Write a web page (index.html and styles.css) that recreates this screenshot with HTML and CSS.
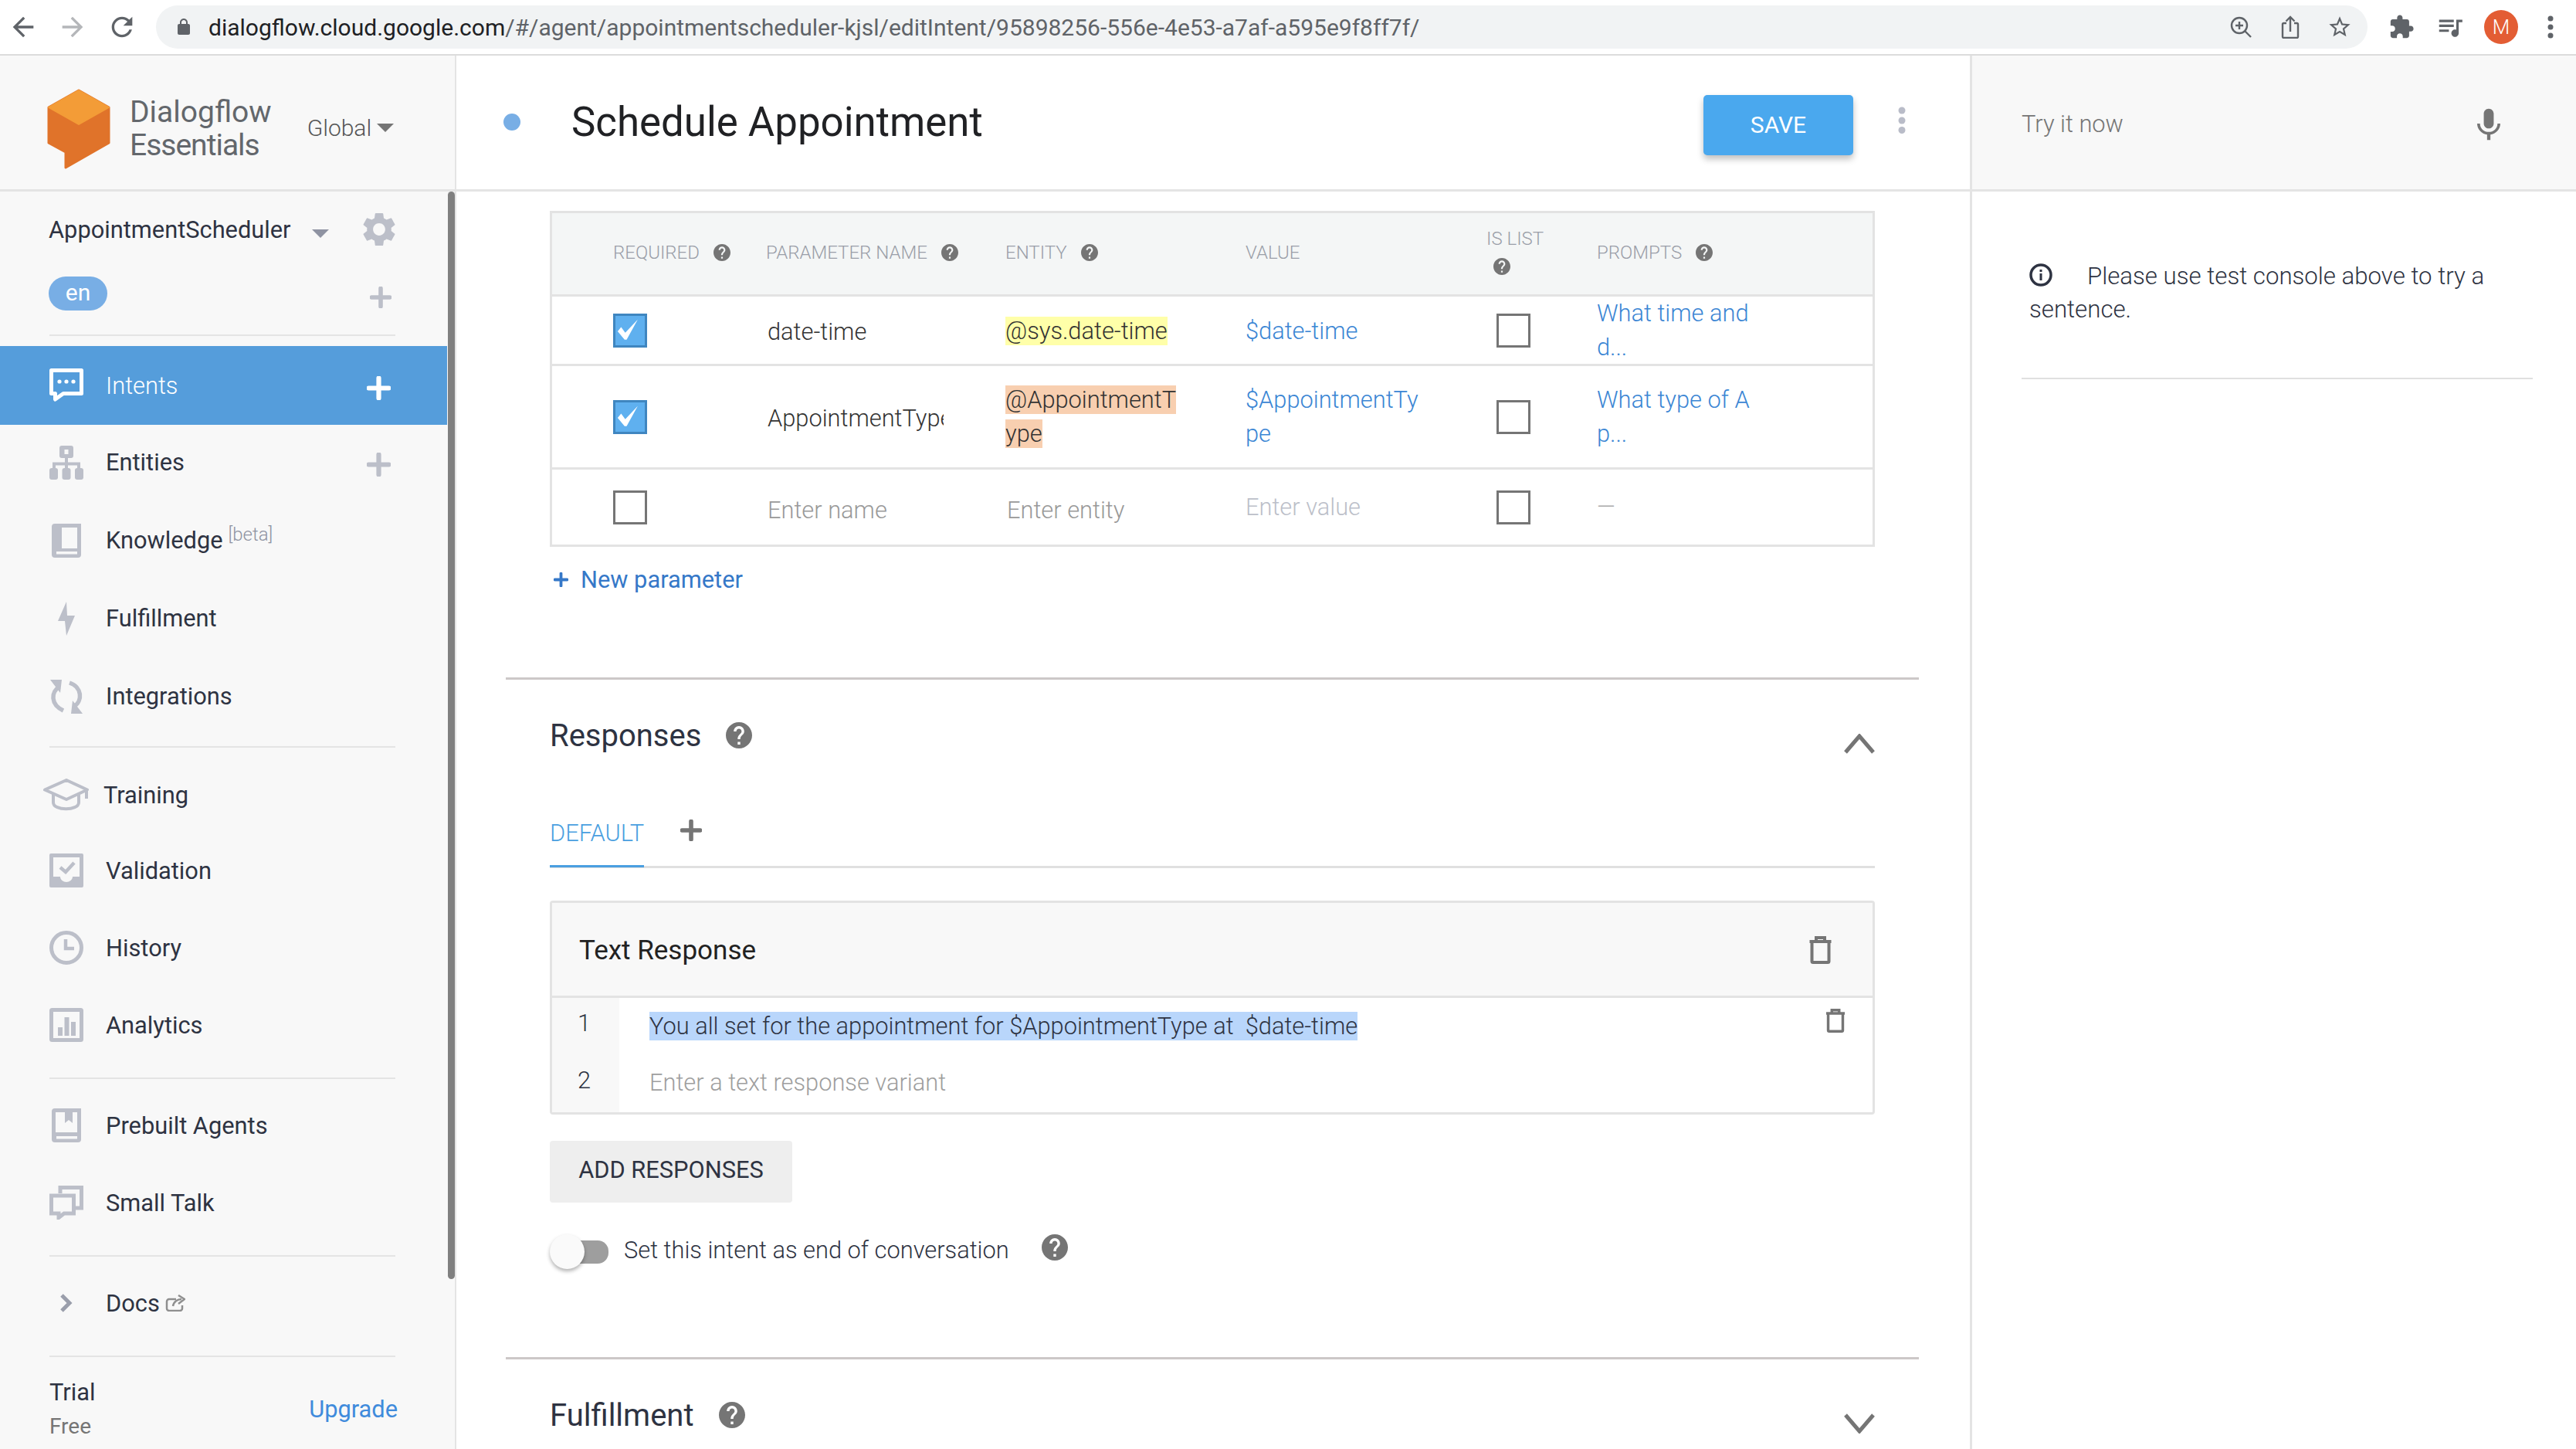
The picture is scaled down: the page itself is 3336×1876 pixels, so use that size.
FILE: index.html
```html
<!DOCTYPE html>
<html lang="en">
<head>
    <meta charset="UTF-8">
    <title>Schedule Appointment - Dialogflow</title>
    <link rel="stylesheet" href="styles.css">
</head>
<body>
    <svg class="sprites" aria-hidden="true">
        <symbol id="i-help" viewBox="2 2 20 20"><path fill-rule="evenodd" d="M12 2C6.48 2 2 6.48 2 12s4.48 10 10 10 10-4.48 10-10S17.52 2 12 2zm1 17h-2v-2h2v2zm2.07-7.75l-.9.92C13.45 12.9 13 13.5 13 15h-2v-.5c0-1.1.45-2.1 1.17-2.83l1.24-1.26c.37-.36.59-.86.59-1.41 0-1.1-.9-2-2-2s-2 .9-2 2H8c0-2.21 1.79-4 4-4s4 1.79 4 4c0 .88-.36 1.68-.93 2.25z"/></symbol>
        <symbol id="i-plus" viewBox="0 0 30 30"><path d="M15 2.5v25M2.5 15h25" fill="none" stroke="currentColor" stroke-width="6" stroke-linecap="round"/></symbol>
        <symbol id="i-trash" viewBox="0 0 30 36"><path d="M9.500 6V2h11v4M1 7h28M4 8v24.500a1.500 1.500 0 0 0 1.500 1.500h19a1.500 1.500 0 0 0 1.500-1.500V8" fill="none" stroke="currentColor" stroke-width="4"/></symbol>
        <symbol id="i-check" viewBox="0 0 38 38"><path d="M1 20L6 14L12 22L30 3L14 32H11Z" fill="#fff"/></symbol>
    </svg>

    <!-- browser toolbar -->
    <div class="browser-bar">
        <svg class="br-nav" viewBox="0 0 24 24"><path d="M20 11H7.830l5.590-5.590L12 4l-8 8 8 8 1.410-1.410L7.830 13H20v-2z"/></svg>
        <svg class="br-nav br-disabled" viewBox="0 0 24 24"><path d="M4 13h12.170l-5.590 5.590L12 20l8-8-8-8-1.410 1.410L16.170 11H4v2z"/></svg>
        <svg class="br-nav" viewBox="0 0 24 24"><path d="M17.650 6.350C16.200 4.900 14.210 4 12 4c-4.420 0-7.990 3.580-7.990 8s3.570 8 7.990 8c3.730 0 6.840-2.550 7.730-6h-2.080c-.82 2.330-3.040 4-5.650 4-3.310 0-6-2.690-6-6s2.690-6 6-6c1.660 0 3.140.69 4.220 1.780L13 11h7V4l-2.350 2.350z"/></svg>
        <div class="omnibox">
            <svg class="lock" viewBox="0 0 24 24"><path fill-rule="evenodd" d="M18 8h-1V6c0-2.760-2.240-5-5-5S7 3.240 7 6v2H6c-1.100 0-2 .9-2 2v10c0 1.100.9 2 2 2h12c1.100 0 2-.9 2-2V10c0-1.100-.9-2-2-2zM9 6c0-1.660 1.340-3 3-3s3 1.340 3 3v2H9V6z"/></svg>
            <span class="url">dialogflow.cloud.google.com<span class="url-path">/#/agent/appointmentscheduler-kjsl/editIntent/95898256-556e-4e53-a7af-a595e9f8ff7f/</span></span>
            <svg class="omni-icon" viewBox="-3 -1 34 30"><circle cx="12" cy="12" r="10" fill="none" stroke="currentColor" stroke-width="2.400"/><path d="M19 19L27 27M12 7v10M7 12h10" fill="none" stroke="currentColor" stroke-width="2.400"/></svg>
            <svg class="omni-icon" viewBox="-3 0 34 30"><path d="M9 10H5.500a1.500 1.500 0 0 0-1.500 1.500v16a1.500 1.500 0 0 0 1.500 1.500h17a1.500 1.500 0 0 0 1.500-1.500v-16a1.500 1.500 0 0 0-1.500-1.500H19M14 21V2M8.500 7.500L14 2l5.500 5.500" fill="none" stroke="currentColor" stroke-width="2.400"/></svg>
            <svg class="omni-icon" viewBox="1 1 22 22"><path fill="currentColor" fill-rule="evenodd" d="M22 9.240l-7.190-.62L12 2 9.190 8.630 2 9.240l5.460 4.730L5.820 21 12 17.270 18.180 21l-1.630-7.030L22 9.240zM12 15.400l-3.760 2.270 1-4.280-3.320-2.880 4.380-.38L12 6.100l1.710 4.040 4.380.38-3.320 2.880 1 4.280L12 15.400z"/></svg>
        </div>
        <svg class="br-tool" viewBox="0 0 24 24"><path d="M20.500 11H19V7c0-1.100-.9-2-2-2h-4V3.500C13 2.120 11.880 1 10.500 1S8 2.120 8 3.500V5H4c-1.100 0-1.990.9-1.990 2v3.800H3.500c1.490 0 2.700 1.210 2.700 2.700s-1.210 2.700-2.700 2.700H2V20c0 1.100.9 2 2 2h3.800v-1.500c0-1.490 1.210-2.700 2.700-2.700 1.490 0 2.700 1.210 2.700 2.700V22H17c1.100 0 2-.9 2-2v-4h1.500c1.380 0 2.500-1.120 2.500-2.500S21.880 11 20.500 11z"/></svg>
        <svg class="br-tool" viewBox="0 0 24 24"><path d="M15 6H3v2h12V6zm0 4H3v2h12v-2zM3 16h8v-2H3v2zM17 6v8.180c-.31-.11-.65-.18-1-.18-1.660 0-3 1.340-3 3s1.340 3 3 3 3-1.340 3-3V8h3V6h-5z"/></svg>
        <div class="avatar">M</div>
        <svg class="br-menu" viewBox="0 0 8 32"><circle cx="4" cy="5" r="3.500"/><circle cx="4" cy="16" r="3.500"/><circle cx="4" cy="27" r="3.500"/></svg>
    </div>

    <div class="app">
        <!-- left navigation -->
        <aside class="sidebar">
            <div class="brand">
                <svg class="logo" viewBox="-2 -2 84 106">
                    <path d="M40 1L79 23V69L23 101V81L1 69V23Z" fill="#e0732a" stroke="#e0732a" stroke-width="3" stroke-linejoin="round"/>
                    <path d="M40 1L79 23L40 45L1 23Z" fill="#f39c37" stroke="#f39c37" stroke-width="2" stroke-linejoin="round"/>
                </svg>
                <div class="brand-name">Dialogflow<br><span class="brand-second">Essentials</span></div>
                <div class="region">Global<span class="caret caret-dark"></span></div>
            </div>

            <div class="agent">
                <div class="agent-row">
                    <span class="agent-name">AppointmentScheduler</span>
                    <span class="caret caret-light"></span>
                    <svg class="gear" viewBox="2 1.500 20 21"><path fill-rule="evenodd" d="M19.140 12.940c.04-.3.06-.61.06-.94 0-.32-.02-.64-.07-.94l2.030-1.580c.18-.14.23-.41.12-.61l-1.920-3.320c-.12-.22-.37-.29-.59-.22l-2.390.96c-.5-.38-1.030-.7-1.620-.94l-.36-2.540c-.04-.24-.24-.41-.48-.41h-3.840c-.24 0-.43.17-.47.41l-.36 2.540c-.59.24-1.130.57-1.620.94l-2.390-.96c-.22-.08-.47 0-.59.22L2.740 8.870c-.12.21-.08.47.12.61l2.030 1.580c-.05.3-.09.63-.09.94s.02.64.07.94l-2.030 1.580c-.18.14-.23.41-.12.61l1.920 3.320c.12.22.37.29.59.22l2.390-.96c.5.38 1.030.7 1.620.94l.36 2.540c.05.24.24.41.48.41h3.840c.24 0 .44-.17.47-.41l.36-2.540c.59-.24 1.130-.56 1.620-.94l2.390.96c.22.08.47 0 .59-.22l1.920-3.320c.12-.22.07-.47-.12-.61l-2.010-1.580zM12 15.600c-1.980 0-3.600-1.620-3.600-3.600s1.620-3.600 3.600-3.600 3.600 1.620 3.600 3.600-1.620 3.600-3.600 3.600z"/></svg>
                </div>
                <div class="lang-row">
                    <span class="lang-pill">en</span>
                    <svg class="lang-plus"><use href="#i-plus"/></svg>
                </div>
            </div>
            <div class="side-divider"></div>

            <nav class="nav nav-main">
                <div class="nav-item active">
                    <svg class="nav-icon" viewBox="0 0 44 44"><path d="M2.500 2.500H41.500V32.500H18L7.500 40V32.500H2.500Z" fill="none" stroke="currentColor" stroke-width="5" stroke-linejoin="round"/><circle cx="13" cy="17" r="2.600" fill="currentColor"/><circle cx="22" cy="17" r="2.600" fill="currentColor"/><circle cx="31" cy="17" r="2.600" fill="currentColor"/></svg>
                    <span>Intents</span>
                    <svg class="nav-plus"><use href="#i-plus"/></svg>
                </div>
                <div class="nav-item">
                    <svg class="nav-icon" viewBox="0 0 44 44"><path fill="currentColor" fill-rule="evenodd" d="M16 0h12a3 3 0 0 1 3 3v10a3 3 0 0 1-3 3H16a3 3 0 0 1-3-3V3a3 3 0 0 1 3-3zm3.500 5v6h5V5z"/><path d="M22 15v15M6 30v-6.500h32V30" fill="none" stroke="currentColor" stroke-width="4"/><rect x="0" y="29" width="11" height="15" rx="3" fill="currentColor"/><rect x="16.500" y="29" width="11" height="15" rx="3" fill="currentColor"/><rect x="33" y="29" width="11" height="15" rx="3" fill="currentColor"/></svg>
                    <span>Entities</span>
                    <svg class="nav-plus"><use href="#i-plus"/></svg>
                </div>
                <div class="nav-item">
                    <svg class="nav-icon" viewBox="-3 0 44 44"><path fill="currentColor" fill-rule="evenodd" d="M4 0h34v40a4 4 0 0 1-4 4H4a4 4 0 0 1-4-4V4a4 4 0 0 1 4-4zm9 5v27h20V5zM6 36v3.500h27V36z"/></svg>
                    <span>Knowledge</span><span class="beta">[beta]</span>
                </div>
                <div class="nav-item">
                    <svg class="nav-icon" viewBox="-11 0 44 44"><path fill="currentColor" d="M11 0L0 25h9l2 19 11-26H12z"/></svg>
                    <span>Fulfillment</span>
                </div>
                <div class="nav-item">
                    <svg class="nav-icon" viewBox="0 0 44 44"><path d="M13 9C2 16 1 32 18 40M26 4C42 9 44 28 31 35" fill="none" stroke="currentColor" stroke-width="5.500"/><path fill="currentColor" d="M1 0h15l-2 17zM43 44H28l2-17z"/></svg>
                    <span>Integrations</span>
                </div>
            </nav>
            <div class="side-divider divider-a"></div>

            <nav class="nav">
                <div class="nav-item nav-training">
                    <svg class="nav-cap" viewBox="0 0 59 42"><path d="M2 14.500L30 2l27 12.500L30 27z" fill="none" stroke="currentColor" stroke-width="4" stroke-linejoin="round"/><path d="M13 20v11c0 11 33 11 33 0V20M56 14v12" fill="none" stroke="currentColor" stroke-width="4"/></svg>
                    <span>Training</span>
                </div>
                <div class="nav-item">
                    <svg class="nav-icon" viewBox="0 0 44 44"><path fill="currentColor" fill-rule="evenodd" d="M2 0h40a2 2 0 0 1 2 2v40a2 2 0 0 1-2 2H2a2 2 0 0 1-2-2V2a2 2 0 0 1 2-2zm3 5v25h9c0 4 4 7 8 7s8-3 8-7h9V5z"/><path d="M14 18l7 6 11-12" fill="none" stroke="currentColor" stroke-width="4.500"/></svg>
                    <span>Validation</span>
                </div>
                <div class="nav-item">
                    <svg class="nav-icon" viewBox="0 0 44 44"><circle cx="22" cy="22" r="19.500" fill="none" stroke="currentColor" stroke-width="5"/><path d="M21 11v12h11" fill="none" stroke="currentColor" stroke-width="4.500"/></svg>
                    <span>History</span>
                </div>
                <div class="nav-item">
                    <svg class="nav-icon" viewBox="0 0 44 44"><rect x="2.500" y="2.500" width="39" height="39" rx="1" fill="none" stroke="currentColor" stroke-width="5"/><path fill="currentColor" d="M11 25h6v11h-6zM19.500 12h6v24h-6zM28 18h6v18h-6z"/></svg>
                    <span>Analytics</span>
                </div>
            </nav>
            <div class="side-divider divider-b"></div>

            <nav class="nav">
                <div class="nav-item">
                    <svg class="nav-icon" viewBox="-3 0 44 44"><path fill="currentColor" fill-rule="evenodd" d="M4 0h34v40a4 4 0 0 1-4 4H4a4 4 0 0 1-4-4V4a4 4 0 0 1 4-4zm1 5v26h28V5h-6v14l-5-4-5 4V5zm1 31v3.500h27V36z"/></svg>
                    <span>Prebuilt Agents</span>
                </div>
                <div class="nav-item">
                    <svg class="nav-icon" viewBox="0 0 44 44"><path d="M14 10V2.500H41.500V29H34" fill="none" stroke="currentColor" stroke-width="5"/><path d="M2.500 13H31.500V36H19L12 41.500V36H2.500Z" fill="none" stroke="currentColor" stroke-width="5"/></svg>
                    <span>Small Talk</span>
                </div>
            </nav>
            <div class="side-divider divider-c"></div>

            <nav class="nav">
                <div class="nav-item">
                    <svg class="nav-chevron" viewBox="0 0 18 26"><path d="M3 3l10 10L3 23" fill="none" stroke="currentColor" stroke-width="5"/></svg>
                    <span>Docs</span>
                    <svg class="ext-link" viewBox="0 0 26 22"><path d="M14 6H5a3 3 0 0 0-3 3v9a3 3 0 0 0 3 3h14a3 3 0 0 0 3-3v-4" fill="none" stroke="currentColor" stroke-width="2.500"/><path d="M10 15c1-6 6-9 11-9M17 1l8 5-8 6" fill="none" stroke="currentColor" stroke-width="2.500"/></svg>
                </div>
            </nav>
            <div class="side-divider divider-c"></div>

            <div class="plan">
                <div>
                    <div class="plan-name">Trial</div>
                    <div class="plan-sub">Free</div>
                </div>
                <span class="upgrade">Upgrade</span>
            </div>
            <div class="side-scroll"></div>
        </aside>

        <!-- intent editor -->
        <main class="editor">
            <header class="editor-head">
                <span class="status-dot"></span>
                <h1 class="intent-title">Schedule Appointment</h1>
                <button class="save-btn">SAVE</button>
                <svg class="more" viewBox="0 0 10 36"><circle cx="5" cy="5" r="4.500"/><circle cx="5" cy="18" r="4.500"/><circle cx="5" cy="30.500" r="4.500"/></svg>
            </header>

            <div class="editor-body">
                <div class="params">
                    <div class="params-row params-head">
                        <div class="th">REQUIRED <svg class="help-sm"><use href="#i-help"/></svg></div>
                        <div class="th">PARAMETER NAME <svg class="help-sm"><use href="#i-help"/></svg></div>
                        <div class="th">ENTITY <svg class="help-sm"><use href="#i-help"/></svg></div>
                        <div class="th">VALUE</div>
                        <div class="th th-list">IS LIST<br><svg class="help-sm"><use href="#i-help"/></svg></div>
                        <div class="th">PROMPTS <svg class="help-sm"><use href="#i-help"/></svg></div>
                    </div>
                    <div class="params-row row-one">
                        <div><span class="check checked"><svg><use href="#i-check"/></svg></span></div>
                        <div class="cell-name">date-time</div>
                        <div class="cell-entity"><span class="hl-yellow">@sys.date-time</span></div>
                        <div class="link cell-value">$date-time</div>
                        <div class="cell-list"><span class="check"></span></div>
                        <div class="link">What time and<br>d...</div>
                    </div>
                    <div class="params-row row-two">
                        <div><span class="check checked"><svg><use href="#i-check"/></svg></span></div>
                        <div class="cell-name"><span class="clip">AppointmentType</span></div>
                        <div class="cell-entity"><span class="hl-orange">@AppointmentT<br>ype</span></div>
                        <div class="link">$AppointmentTy<br>pe</div>
                        <div class="cell-list"><span class="check"></span></div>
                        <div class="link">What type of A<br>p...</div>
                    </div>
                    <div class="params-row row-three">
                        <div><span class="check"></span></div>
                        <div class="cell-name ph">Enter name</div>
                        <div class="cell-entity ph">Enter entity</div>
                        <div class="ph-light">Enter value</div>
                        <div class="cell-list"><span class="check"></span></div>
                        <div class="ph-dash">—</div>
                    </div>
                </div>

                <div class="new-param"><svg class="new-plus"><use href="#i-plus"/></svg>New parameter</div>

                <section class="section">
                    <div class="section-head">
                        <h2>Responses</h2>
                        <svg class="help-lg"><use href="#i-help"/></svg>
                        <svg class="chev" viewBox="0 0 40 26"><path d="M2 24L20 3l18 21" fill="none" stroke="currentColor" stroke-width="5"/></svg>
                    </div>

                    <div class="tabs">
                        <div class="tab">DEFAULT</div>
                        <svg class="tab-plus"><use href="#i-plus"/></svg>
                    </div>

                    <div class="card">
                        <div class="card-head">
                            <span>Text Response</span>
                            <svg class="trash-lg"><use href="#i-trash"/></svg>
                        </div>
                        <div class="variant variant-one">
                            <div class="variant-num">1</div>
                            <div class="variant-text"><span class="selected">You all set for the appointment for $AppointmentType at &nbsp;$date-time</span></div>
                            <svg class="trash-sm"><use href="#i-trash"/></svg>
                        </div>
                        <div class="variant variant-two">
                            <div class="variant-num">2</div>
                            <div class="variant-text ph-dark">Enter a text response variant</div>
                        </div>
                    </div>

                    <button class="add-btn">ADD RESPONSES</button>

                    <div class="end-row">
                        <span class="switch"><span class="switch-knob"></span></span>
                        <span class="end-label">Set this intent as end of conversation</span>
                        <svg class="help-lg"><use href="#i-help"/></svg>
                    </div>
                </section>

                <section class="section section-last">
                    <div class="section-head">
                        <h2>Fulfillment</h2>
                        <svg class="help-lg"><use href="#i-help"/></svg>
                        <svg class="chev" viewBox="0 0 40 26"><path d="M2 2l18 21L38 2" fill="none" stroke="currentColor" stroke-width="5"/></svg>
                    </div>
                </section>
            </div>
        </main>

        <!-- test console -->
        <aside class="console">
            <div class="console-head">
                <span>Try it now</span>
                <svg class="mic" viewBox="5 2 14 19"><path d="M12 14c1.660 0 3-1.340 3-3V5c0-1.660-1.340-3-3-3S9 3.340 9 5v6c0 1.660 1.340 3 3 3zm5.300-3c0 3-2.540 5.100-5.300 5.100S6.700 14 6.700 11H5c0 3.410 2.720 6.230 6 6.720V21h2v-3.280c3.280-.48 6-3.300 6-6.720h-1.700z"/></svg>
            </div>
            <div class="console-body">
                <p class="console-msg"><svg class="info" viewBox="0 0 30 30"><circle cx="15" cy="15" r="13" fill="none" stroke="currentColor" stroke-width="3.500"/><path d="M13.500 8h3v3h-3zM13.500 13h3v9h-3z" fill="currentColor"/></svg>Please use test console above to try a sentence.</p>
            </div>
        </aside>
    </div>
</body>
</html>
```
FILE: styles.css
```css
/* Reset */
* {
    box-sizing: border-box;
}

body {
    margin: 0;
    width: 3336px;
    height: 1876px;
    overflow: hidden;
    background-color: #fff;
    color: #2e3342;
    font-family: Roboto, "Liberation Sans", sans-serif;
    font-size: 30.8px;
}

.sprites {
    display: none;
}

/* Browser toolbar */
.browser-bar {
    display: flex;
    align-items: center;
    height: 72px;
    padding-left: 10px;
    border-bottom: 2px solid #dcdcdc;
    fill: #5f6368;
}

.br-nav {
    width: 40px;
    height: 40px;
    margin-right: 24px;
    flex: none;
}

.br-disabled {
    fill: #b4b6b9;
}

.omnibox {
    display: flex;
    align-items: center;
    width: 2864px;
    height: 56px;
    padding-left: 24px;
    border-radius: 28px;
    background-color: #f1f3f4;
    color: #5f6368;
}

.lock {
    width: 24px;
    height: 26px;
    margin-right: 20px;
}

.url {
    flex: 1;
    font-size: 30px;
    color: #202124;
}

.url-path {
    color: #5f6368;
}

.omni-icon {
    width: 34px;
    height: 30px;
    margin-right: 30px;
}

.omni-icon:last-child {
    margin-right: 19px;
}

.br-tool {
    width: 34px;
    height: 34px;
    margin-left: 27px;
    margin-right: 2px;
}

.br-tool + .br-tool {
    width: 38px;
    height: 38px;
    margin-left: 25px;
    margin-right: 0;
}

.avatar {
    width: 44px;
    height: 44px;
    margin-left: 25px;
    border-radius: 50%;
    background-color: #e35d34;
    color: #fff;
    font-size: 26px;
    font-weight: 300;
    line-height: 44px;
    text-align: center;
}

.br-menu {
    width: 8px;
    height: 32px;
    margin-left: 38px;
}

/* Page columns */
.app {
    display: flex;
    height: 1804px;
}

/* Sidebar */
.sidebar {
    position: relative;
    flex: none;
    width: 591px;
    padding-right: 10px;
    border-right: 2px solid #e4e4e4;
    background-color: #f8f8f8;
}

.brand {
    display: flex;
    align-items: center;
    height: 176px;
    margin-right: -10px;
    padding: 16px 0 0 60px;
    border-bottom: 3px solid #e4e4e4;
}

.logo {
    width: 84px;
    height: 106px;
    flex: none;
}

.brand-name {
    margin-left: 24px;
    font-size: 39px;
    line-height: 43px;
    color: #63676c;
}

.brand-second {
    letter-spacing: -1px;
}

.region {
    margin-left: 46px;
    margin-top: -2px;
    font-size: 30px;
    font-weight: 300;
    color: #555;
}

.caret {
    display: inline-block;
    width: 0;
    height: 0;
    border-left: 11px solid transparent;
    border-right: 11px solid transparent;
}

.caret-dark {
    margin-left: 7px;
    margin-bottom: 5px;
    border-top: 11px solid #757575;
}

.caret-light {
    margin-left: 27px;
    margin-top: 10px;
    border-top: 11px solid #8f93a2;
}

.agent {
    padding-left: 63px;
}

.agent-row {
    display: flex;
    align-items: center;
    height: 46px;
    margin-top: 26px;
}

.gear {
    width: 44px;
    height: 46px;
    margin-left: 43px;
    fill: #bcbfc9;
}

.lang-row {
    display: flex;
    align-items: center;
    margin-top: 38px;
    height: 44px;
}

.lang-pill {
    width: 76px;
    height: 44px;
    border-radius: 22px;
    background-color: #78aee5;
    color: #fff;
    font-size: 30px;
    line-height: 42px;
    text-align: center;
}

.lang-plus {
    width: 28px;
    height: 28px;
    margin-left: 340px;
    margin-top: 10px;
    color: #bcbfc9;
}

.side-divider {
    height: 2px;
    margin: 31px 67px 13px 64px;
    background-color: #e4e4e4;
}

.divider-a {
    margin-top: 14px;
    margin-bottom: 11px;
}

.divider-b {
    margin-top: 18px;
    margin-bottom: 10px;
}

.divider-c {
    margin-top: 18px;
    margin-bottom: 10px;
}

.nav-item {
    display: flex;
    align-items: center;
    height: 100px;
    padding-left: 64px;
    color: #2e3342;
}

.nav-main .nav-item {
    height: 101px;
}

.nav-main .nav-item.active {
    height: 102px;
    margin-bottom: -2px;
    background-color: #559ddb;
    color: #fff;
    font-weight: 300;
}

.nav-training {
    margin-bottom: -2px;
}

.nav-icon {
    width: 44px;
    height: 44px;
    flex: none;
    margin-right: 29px;
    color: #bcbfc9;
}

.active .nav-icon,
.active .nav-plus {
    color: #fff;
}

.nav-plus {
    width: 31px;
    height: 31px;
    margin-left: auto;
    margin-right: 73px;
    margin-top: 6px;
    color: #bcbfc9;
}

.beta {
    margin-left: 7px;
    margin-bottom: 16px;
    font-size: 24px;
    font-weight: 300;
    color: #8f93a2;
}

.nav-cap {
    width: 59px;
    height: 42px;
    flex: none;
    margin-left: -8px;
    margin-right: 19px;
    color: #bcbfc9;
}

.nav-chevron {
    width: 18px;
    height: 26px;
    margin-left: 13px;
    margin-right: 42px;
    color: #9a9eab;
}

.ext-link {
    width: 26px;
    height: 22px;
    margin-left: 7px;
    color: #8f8f8f;
}

.plan {
    display: flex;
    align-items: center;
    justify-content: space-between;
    padding: 15px 64px 0 64px;
}

.plan-name {
    line-height: 42px;
}

.plan-sub {
    font-size: 28px;
    line-height: 46px;
    color: #757575;
}

.upgrade {
    margin-top: -3px;
    color: #3f8bdc;
}

.side-scroll {
    position: absolute;
    top: 176px;
    right: 0;
    width: 9px;
    height: 1408px;
    border-radius: 5px;
    background-color: #808080;
}

/* Intent editor */
.editor {
    flex: 1;
    min-width: 0;
}

.editor-head {
    display: flex;
    align-items: center;
    height: 176px;
    padding-left: 61px;
    border-bottom: 3px solid #e4e4e4;
}

.status-dot {
    width: 22px;
    height: 22px;
    margin-top: -2px;
    border-radius: 50%;
    background-color: #78aee5;
}

.intent-title {
    flex: 1;
    margin: -2px 0 0 66px;
    font-size: 52.8px;
    font-weight: 400;
    color: #202124;
}

.save-btn {
    width: 194px;
    height: 78px;
    margin-top: 6px;
    border: none;
    border-radius: 5px;
    background-color: #4aa8ee;
    box-shadow: 0 5px 9px rgba(0, 0, 0, 0.25);
    color: #fff;
    font-family: inherit;
    font-size: 30px;
}

.more {
    width: 10px;
    height: 36px;
    margin: -6px 83px 0 58px;
    fill: #b9bcc8;
}

.editor-body {
    padding: 25px 66px 0 64px;
}

/* Parameters table */
.params {
    margin: 0 57px;
    border: 3px solid #e3e3e3;
    border-bottom-width: 0;
}

.params-row {
    display: grid;
    grid-template-columns: 198px 310px 311px 312px 143px 1fr;
    align-items: center;
    padding-left: 79px;
    border-bottom: 3px solid #e3e3e3;
    font-weight: 300;
    line-height: 44px;
}

.params-head {
    height: 108px;
    padding-bottom: 4px;
    background-color: #f4f6f6;
}

.row-one {
    height: 90px;
}

.row-two {
    height: 134px;
}

.row-three {
    height: 100px;
}

.th {
    display: flex;
    align-items: center;
    gap: 18px;
    font-size: 24px;
    color: #9a9ea8;
}

.th-list {
    display: block;
    line-height: 36px;
}

.help-sm {
    width: 22px;
    height: 22px;
    fill: #757575;
}

.th-list .help-sm {
    display: block;
    margin: 7px 0 7px 9px;
}

.check {
    display: block;
    width: 44px;
    height: 44px;
    border: 3px solid #757575;
    background-color: #fff;
}

.check.checked {
    padding: 2px;
    border-color: #3f86c0;
    background-color: #5fb0ef;
}

.check svg {
    display: block;
    width: 34px;
    height: 34px;
}

.cell-name {
    margin-top: 4px;
    padding-left: 2px;
    color: #333;
}

.row-three .cell-name,
.row-three .cell-entity {
    margin-top: 8px;
}

.clip {
    display: block;
    width: 228px;
    overflow: hidden;
    white-space: nowrap;
}

.row-one .cell-entity,
.row-one .cell-value {
    margin-top: 2px;
}

.cell-entity {
    color: #333;
}

.cell-entity.ph {
    padding-left: 2px;
    color: #999;
}

.hl-yellow {
    background-color: #ffffa9;
}

.hl-orange {
    background-color: #f8cfb0;
}

.link {
    color: #3b86d4;
}

.cell-list {
    padding-left: 13px;
}

.ph {
    color: #999;
}

.ph-light {
    color: #bcbfc9;
}

.ph-dash {
    color: #aaa;
}

.new-param {
    display: flex;
    align-items: center;
    height: 40px;
    margin: 22px 57px 0;
    color: #3578c8;
}

.new-plus {
    width: 19px;
    height: 19px;
    margin: 0 16px 0 5px;
}

/* Sections */
.section {
    margin-top: 107px;
    padding: 50px 57px 0;
    border-top: 3px solid #ccc8c8;
}

.section-last {
    margin-top: 114px;
}

.section-head {
    display: flex;
    align-items: center;
    gap: 32px;
    height: 44px;
}

.section-head h2 {
    margin: 0;
    font-size: 40px;
    font-weight: 400;
}

.help-lg {
    width: 34px;
    height: 34px;
    fill: #757575;
}

.chev {
    width: 40px;
    height: 26px;
    margin-left: auto;
    margin-top: 22px;
    color: #757575;
}

.tabs {
    display: flex;
    align-items: center;
    gap: 47px;
    height: 93px;
    margin-top: 57px;
    border-bottom: 3px solid #e0e0e0;
}

.tab {
    height: 93px;
    padding-top: 31px;
    border-bottom: 3px solid #4a9fe0;
    color: #4a9fe0;
    font-weight: 300;
    line-height: 36px;
}

.tab-plus {
    width: 28px;
    height: 28px;
    margin-top: -2px;
    color: #757575;
}

/* Text response card */
.card {
    margin-top: 42px;
    border: 3px solid #e3e3e3;
    border-radius: 4px;
}

.card-head {
    display: flex;
    align-items: center;
    justify-content: space-between;
    height: 123px;
    padding: 2px 52px 0 35px;
    border-bottom: 3px solid #e3e3e3;
    background-color: #f8f8f8;
    color: #222;
    font-size: 35px;
}

.trash-lg {
    width: 31px;
    height: 36px;
    color: #757575;
}

.variant {
    display: flex;
}

.variant-one {
    height: 70px;
}

.variant-two {
    height: 78px;
}

.variant-num {
    width: 87px;
    padding: 15px 0 0 33px;
    background-color: #f8f8f8;
    font-weight: 300;
    line-height: 36px;
}

.variant-two .variant-num {
    padding-top: 19px;
}

.variant-text {
    padding: 19px 0 0 39px;
    font-weight: 300;
    line-height: 36px;
}

.variant-two .variant-text {
    padding-top: 22px;
}

.selected {
    background-color: #b9d6fb;
}

.ph-dark {
    color: #9e9e9e;
}

.trash-sm {
    width: 26px;
    height: 31px;
    margin-left: auto;
    margin-top: 14px;
    margin-right: 35px;
    color: #757575;
}

.add-btn {
    display: block;
    width: 314px;
    height: 80px;
    margin-top: 34px;
    padding-bottom: 6px;
    border: none;
    border-radius: 4px;
    background-color: #eee;
    color: #2e3342;
    font-family: inherit;
    font-size: 30.8px;
    font-weight: 400;
}

.end-row {
    display: flex;
    align-items: center;
    height: 45px;
    margin-top: 41px;
}

.switch {
    position: relative;
    width: 66px;
    height: 30px;
    margin: 0 20px 0 10px;
    border-radius: 14px;
    background-color: #9e9e9e;
}

.switch-knob {
    position: absolute;
    left: -10px;
    top: -8px;
    width: 45px;
    height: 45px;
    border-radius: 50%;
    background-color: #fafafa;
    box-shadow: 0 3px 5px rgba(0, 0, 0, 0.3);
}

.end-label {
    margin-top: -4px;
    margin-right: 42px;
    font-weight: 300;
}

.end-row .help-lg {
    margin-top: -12px;
}

/* Test console */
.console {
    flex: none;
    width: 785px;
    border-left: 3px solid #e4e4e4;
}

.console-head {
    display: flex;
    align-items: center;
    justify-content: space-between;
    height: 176px;
    padding: 4px 98px 0 64px;
    border-bottom: 3px solid #e4e4e4;
    background-color: #f8f8f8;
    color: #757575;
    font-weight: 300;
}

.mic {
    width: 30px;
    height: 42px;
    fill: #757575;
}

.console-body {
    margin: 88px 56px 0 64px;
    padding: 0 0 67px 10px;
    border-bottom: 2px solid #e0e0e0;
}

.console-msg {
    margin: 0;
    font-size: 31.2px;
    font-weight: 300;
    line-height: 43px;
}

.info {
    width: 30px;
    height: 30px;
    margin-right: 45px;
    vertical-align: -3px;
}
```
